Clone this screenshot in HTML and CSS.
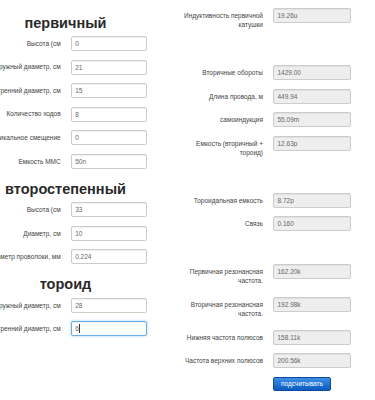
FILE: index.html
```
<!DOCTYPE html>
<html lang="ru">
<head>
  <meta charset="UTF-8" />
  <title>Катушка Тесла</title>
  <link rel="stylesheet" href="styles.css">
</head>
<body>

  <div class="page">

    <!-- входные данные -->
    <div class="col left">
      <h2>первичный</h2>
      <div class="row"><label class="lbl">Высота (см</label><input class="field" type="text" value="0"></div>
      <div class="row"><label class="lbl">Наружный диаметр, см</label><input class="field" type="text" value="21"></div>
      <div class="row"><label class="lbl">Внутренний диаметр, см</label><input class="field" type="text" value="15"></div>
      <div class="row"><label class="lbl">Количество ходов</label><input class="field" type="text" value="8"></div>
      <div class="row"><label class="lbl">Вертикальное смещение</label><input class="field" type="text" value="0"></div>
      <div class="row"><label class="lbl">Емкость ММС</label><input class="field" type="text" value="50n"></div>

      <h2>второстепенный</h2>
      <div class="row"><label class="lbl">Высота (см</label><input class="field" type="text" value="33"></div>
      <div class="row"><label class="lbl">Диаметр, см</label><input class="field" type="text" value="10"></div>
      <div class="row"><label class="lbl">Диаметр проволоки, мм</label><input class="field" type="text" value="0.224"></div>

      <h2>тороид</h2>
      <div class="row"><label class="lbl">Наружный диаметр, см</label><input class="field" type="text" value="28"></div>
      <div class="row"><label class="lbl">Внутренний диаметр, см</label><span class="focus-wrap"><input class="field focused" type="text" value="6"></span></div>
    </div>

    <!-- результаты -->
    <div class="col right">
      <div class="row"><label class="lbl">Индуктивность первичной катушки</label><input class="field" type="text" value="19.26u" readonly></div>
      <div class="spacer"></div>
      <div class="row"><label class="lbl">Вторичные обороты</label><input class="field" type="text" value="1429.00" readonly></div>
      <div class="row"><label class="lbl">Длина провода, м</label><input class="field" type="text" value="449.94" readonly></div>
      <div class="row"><label class="lbl">самоиндукция</label><input class="field" type="text" value="55.09m" readonly></div>
      <div class="row"><label class="lbl">Емкость (вторичный + тороид)</label><input class="field" type="text" value="12.63p" readonly></div>
      <div class="spacer"></div>
      <div class="row"><label class="lbl">Тороидальная емкость</label><input class="field" type="text" value="8.72p" readonly></div>
      <div class="row"><label class="lbl">Связь</label><input class="field" type="text" value="0.160" readonly></div>
      <div class="spacer"></div>
      <div class="row"><label class="lbl">Первичная резонансная частота.</label><input class="field" type="text" value="162.20k" readonly></div>
      <div class="row"><label class="lbl">Вторичная резонансная частота.</label><input class="field" type="text" value="192.98k" readonly></div>
      <div class="row"><label class="lbl">Нижняя частота полюсов</label><input class="field" type="text" value="158.11k" readonly></div>
      <div class="row"><label class="lbl">Частота верхних полюсов</label><input class="field" type="text" value="200.56k" readonly></div>
      <div class="btn-row"><button class="btn">подсчитывать</button></div>
    </div>

  </div>

</body>
</html>
```
FILE: styles.css
```
body {
  margin: 0;
  font-family: "Liberation Sans", Arial, sans-serif;
  color: #444;
  background: #fff;
  overflow: hidden;
}

.page {
  display: flex;
  margin-left: -19.3px;
}

.col {
  display: flex;
  flex-direction: column;
}

.left {
  width: 166.6px;
  padding-top: 11px;
}

.right {
  width: 168px;
  margin-left: 35.7px;
  padding-top: 8.3px;
}

h2 {
  margin: 3.5px 0 4.5px 3px;
  font-size: 14.5px;
  line-height: 17px;
  font-weight: bold;
  color: #2a2a2a;
  text-align: center;
}

.row {
  display: grid;
  grid-template-columns: 80px 76.6px;
  column-gap: 10px;
  align-items: start;
  margin-bottom: 8.5px;
}

.right .row {
  grid-template-columns: 80px 78px;
}

.lbl {
  padding: 2.9px 0;
  font-size: 6.5px;
  line-height: 9.25px;
  text-align: right;
}

.left .lbl {
  white-space: nowrap;
}

.spacer {
  height: 15.7px;
  margin-bottom: 8.5px;
}

.field {
  display: block;
  width: 100%;
  height: 15px;
  box-sizing: border-box;
  margin: 0;
  padding: 0 3.5px;
  border: 1px solid #ccc;
  border-radius: 2px;
  box-shadow: inset 0 1px 1px rgba(0, 0, 0, 0.06);
  font-family: inherit;
  font-size: 6.5px;
  color: #666;
  background: #fff;
  outline: none;
}

.field[readonly] {
  background: #eee;
}

.focused {
  border-color: #66afe9;
  box-shadow: inset 0 1px 1px rgba(0, 0, 0, 0.06), 0 0 3px rgba(102, 175, 233, 0.6);
}

.focus-wrap {
  position: relative;
  display: block;
}

/* мигающий курсор */
.focus-wrap::after {
  content: "";
  position: absolute;
  left: 8.6px;
  top: 3px;
  width: 1px;
  height: 9px;
  background: #333;
}

.btn-row {
  padding-left: 90px;
}

.btn {
  display: block;
  width: 58px;
  height: 14px;
  padding: 0;
  border: 1px solid #0b4d9c;
  border-radius: 2px;
  background: linear-gradient(#3b8fe4, #0a5cc0);
  color: #fff;
  font-family: inherit;
  font-size: 6.5px;
  cursor: pointer;
}
```
